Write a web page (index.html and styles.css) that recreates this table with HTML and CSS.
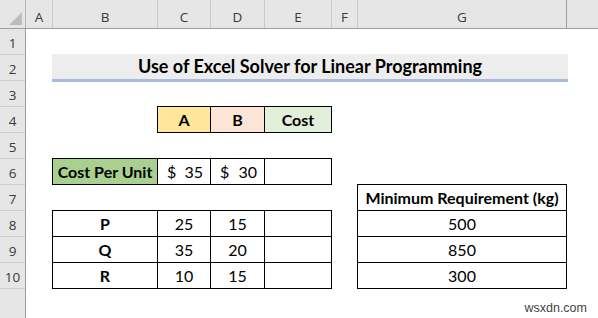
FILE: index.html
```html
<!DOCTYPE html>
<html>
<head>
<meta charset="utf-8">
<link rel="stylesheet" href="styles.css">
</head>
<body>
<div class="sheet">
  <div class="colhead">
    <div class="corner"><span class="tri"></span></div>
    <div class="ch w-a">A</div>
    <div class="ch w-b">B</div>
    <div class="ch w-c">C</div>
    <div class="ch w-d">D</div>
    <div class="ch w-e">E</div>
    <div class="ch w-f">F</div>
    <div class="ch w-g">G</div>
    <div class="ch w-rest"></div>
  </div>
  <div class="body">
    <div class="rowhead">
      <div class="rh">1</div>
      <div class="rh">2</div>
      <div class="rh">3</div>
      <div class="rh">4</div>
      <div class="rh">5</div>
      <div class="rh">6</div>
      <div class="rh">7</div>
      <div class="rh">8</div>
      <div class="rh">9</div>
      <div class="rh">10</div>
      <div class="rh rh-rest"></div>
    </div>
    <div class="cells">
      <div class="title">Use of Excel Solver for Linear Programming</div>

      <div class="box hdr4">
        <div class="c bold fill-yellow">A</div>
        <div class="c bold fill-peach">B</div>
        <div class="c bold fill-green">Cost</div>
      </div>

      <div class="box row6">
        <div class="c bold fill-dgreen">Cost Per Unit</div>
        <div class="c acct"><span>$</span><span>35</span></div>
        <div class="c acct"><span>$</span><span>30</span></div>
        <div class="c"></div>
      </div>

      <div class="box tbl8">
        <div class="c bold">P</div><div class="c">25</div><div class="c">15</div><div class="c"></div>
        <div class="c bold">Q</div><div class="c">35</div><div class="c">20</div><div class="c"></div>
        <div class="c bold">R</div><div class="c">10</div><div class="c">15</div><div class="c"></div>
      </div>

      <div class="box tblg">
        <div class="c bold">Minimum Requirement (kg)</div>
        <div class="c">500</div>
        <div class="c">850</div>
        <div class="c">300</div>
      </div>
    </div>
  </div>
  <div class="watermark">wsxdn.com</div>
</div>
</body>
</html>
```
FILE: styles.css
```css
* { box-sizing: border-box; }
html, body { margin: 0; padding: 0; background: #fff; }
body { width: 598px; height: 318px; overflow: hidden; }

.sheet {
  position: relative;
  width: 598px;
  height: 318px;
  display: flex;
  flex-direction: column;
  font-family: Lato, "Liberation Sans", sans-serif;
  color: #000;
}

/* column header */
.colhead {
  display: flex;
  height: 29px;
  flex: none;
  background: #e6e6e6;
  border-bottom: 1px solid #9e9e9e;
}
.corner {
  width: 26px;
  flex: none;
  border-right: 1px solid #b5b5b5;
  position: relative;
}
.tri {
  position: absolute;
  right: 3px;
  bottom: 3px;
  width: 0;
  height: 0;
  border-left: 13px solid transparent;
  border-bottom: 13px solid #bdbdbd;
}
.ch {
  flex: none;
  border-right: 1px solid #c9c9c9;
  font-family: "Open Sans", "Noto Sans", sans-serif;
  font-size: 13.5px;
  color: #3a3a3a;
  text-align: center;
  padding-top: 9px;
  line-height: 16px;
}
.w-a { width: 27px; }
.w-b { width: 105px; }
.w-c { width: 53px; }
.w-d { width: 54px; }
.w-e { width: 67px; }
.w-f { width: 26px; }
.w-g { width: 209px; border-right-color: #9e9e9e; }
.w-rest { flex: 1; border-right: none; }

/* body */
.body {
  flex: 1;
  display: flex;
  min-height: 0;
}
.rowhead {
  width: 26px;
  flex: none;
  display: flex;
  flex-direction: column;
  background: #e6e6e6;
  border-right: 1px solid #9e9e9e;
}
.rh {
  height: 26px;
  flex: none;
  border-bottom: 1px solid #cfcfcf;
  font-family: "Open Sans", "Noto Sans", sans-serif;
  font-size: 13.5px;
  color: #3a3a3a;
  text-align: center;
  padding-top: 6px;
  line-height: 16px;
}
.rh-rest { flex: 1; border-bottom: none; }

.cells {
  flex: 1;
  display: grid;
  grid-template-columns: 27px 105px 53px 54px 67px 26px 209px 1fr;
  grid-template-rows: repeat(10, 26px) 1fr;
}

.title {
  grid-row: 2;
  grid-column: 2 / 8;
  align-self: start;
  justify-self: start;
  margin: -1px 0 0 -1px;
  width: 516px;
  height: 28px;
  background: #ededed;
  border-bottom: 3px solid #a7bbdd;
  font-weight: 700;
  font-size: 18px;
  line-height: 25px;
  text-align: center;
  position: relative;
  z-index: 1;
}

.box {
  align-self: start;
  justify-self: start;
  margin: -1px 0 0 -1px;
  display: grid;
  gap: 1px;
  padding: 1px;
  background: #000;
}
.hdr4 {
  grid-row: 4;
  grid-column: 3 / 6;
  grid-template-columns: 52px 53px 66px;
  grid-template-rows: 25px;
}
.row6 {
  grid-row: 6;
  grid-column: 2 / 6;
  grid-template-columns: 104px 52px 53px 66px;
  grid-template-rows: 25px;
}
.tbl8 {
  grid-row: 8 / 11;
  grid-column: 2 / 6;
  grid-template-columns: 104px 52px 53px 66px;
  grid-template-rows: repeat(3, 25px);
}
.tblg {
  grid-row: 7 / 11;
  grid-column: 7 / 8;
  grid-template-columns: 208px;
  grid-template-rows: repeat(4, 25px);
}

.c {
  background: #fff;
  font-size: 16px;
  line-height: 25px;
  text-align: center;
  white-space: nowrap;
}
.bold { font-weight: 700; }
.acct {
  display: flex;
  justify-content: space-between;
  padding: 0 7px 0 9px;
}
.fill-yellow { background: #ffe699; }
.fill-peach { background: #fce4d6; }
.fill-green { background: #e2efda; }
.fill-dgreen { background: #a9d08e; }

.watermark {
  position: absolute;
  right: 11px;
  bottom: 3px;
  font-family: "Liberation Sans", Arial, sans-serif;
  font-size: 12.5px;
  color: #444;
  line-height: 14px;
}
```
